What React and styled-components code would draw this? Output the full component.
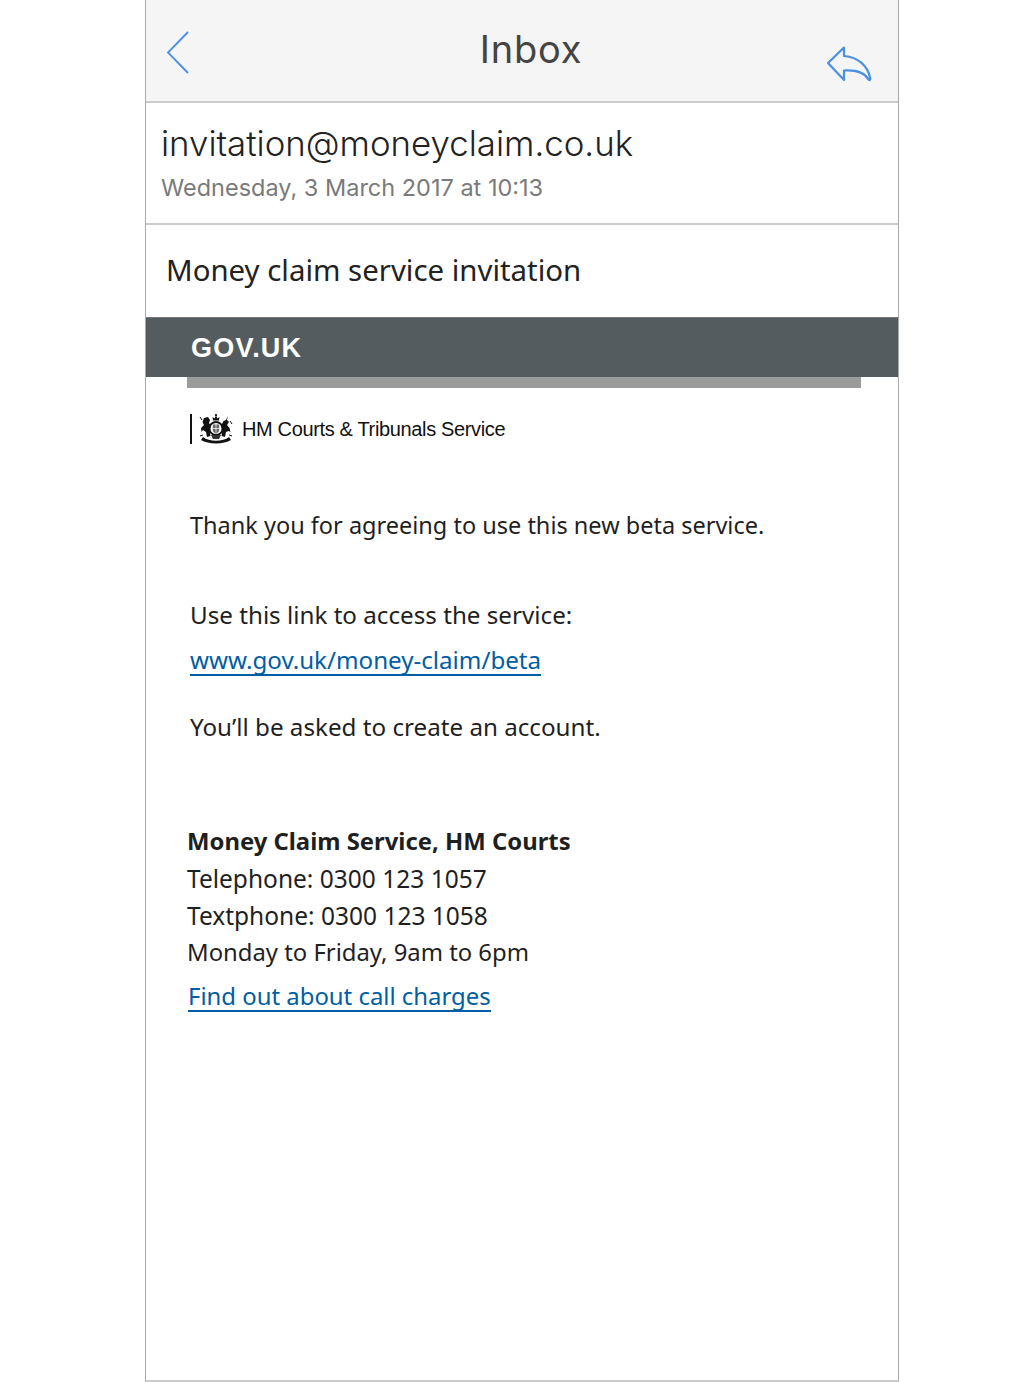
import React from "react";
import styled, { createGlobalStyle } from "styled-components";

const GlobalStyle = createGlobalStyle`
  html, body {
    margin: 0;
    padding: 0;
    background: #fff;
  }
`;

function BackIcon() {
  return (
    <svg width="26" height="46" viewBox="0 0 26 46" fill="none">
      <path d="M23 2 L3 22.5 L23 43" stroke="#4a90e2" strokeWidth="1.8" />
    </svg>
  );
}

function ReplyIcon() {
  return (
    <svg width="48" height="38" viewBox="0 0 48 38" fill="none">
      <path
        d="M18 2.5 L2 18 L18 35 L18 25.5 C28 25 38 26 42.5 34.5 C43.5 35.5 44.5 35 44.3 33.5 C42 21 32 12 18 11 Z"
        stroke="#4a90e2"
        strokeWidth="2.2"
        strokeLinejoin="round"
      />
    </svg>
  );
}

// small version of the royal crest: lion, crown, unicorn, shield, motto scroll
function Crest() {
  return (
    <svg width="34" height="30" viewBox="0 0 34 30" fill="#111">
      <path d="M14 6.5 L13.5 3 L15.5 4.5 L17 1.5 L18.5 4.5 L20.5 3 L20 6.5 Z" />
      <circle cx="17" cy="1.2" r="1.1" />
      <path d="M5 4 L9 3 L11 6 L10 9 L12 12 L10.5 16 L11.5 22 L8 23 L7 18 L4 16 L2.5 18 L2 14 L5 11 L3.5 8 Z" />
      <path d="M29 2 L28 6 L30 8 L28 11 L30.5 14 L31.5 18 L29.5 17 L27 18 L26 23 L22.5 22 L23.5 16 L22 12 L24.5 7 L27 6 Z" />
      <circle cx="17" cy="14.5" r="6.6" fill="none" stroke="#111" strokeWidth="2" />
      <path d="M13.8 10.5 H20.2 V16 C20.2 18 18.5 19 17 19.8 C15.5 19 13.8 18 13.8 16 Z" fill="#666" />
      <path d="M17 10.5 V19.8 M13.8 14.5 H20.2" stroke="#eee" strokeWidth="0.8" />
      <path d="M4 23 C10 28 24 28 30 23 L32 26 C25 30.5 9 30.5 2 26 Z" />
      <path d="M12 21 L22 21 L20 25 L14 25 Z" fill="#333" />
      <path d="M1 3 L3 6 M33 10 L31 7 M1 22 L4 21 M33 22 L30 21" stroke="#111" strokeWidth="1" />
    </svg>
  );
}

function App() {
  return (
    <>
      <GlobalStyle />
      <Phone>
        <NavBar>
          <BackButton>
            <BackIcon />
          </BackButton>
          <NavTitle>Inbox</NavTitle>
          <ReplyButton>
            <ReplyIcon />
          </ReplyButton>
        </NavBar>
        <Sender>
          <FromAddress>invitation@moneyclaim.co.uk</FromAddress>
          <SentDate>Wednesday, 3 March 2017 at 10:13</SentDate>
        </Sender>
        <Subject>Money claim service invitation</Subject>
        <GovBar>GOV.UK</GovBar>
        <GreyRule />
        <MailBody>
          <Logo>
            <LogoBar />
            <CrestBox>
              <Crest />
            </CrestBox>
            <LogoText>HM Courts &amp; Tribunals Service</LogoText>
          </Logo>
          <Para $top={66} $size={23.5}>
            Thank you for agreeing to use this new beta service.
          </Para>
          <Para $top={60}>Use this link to access the service:</Para>
          <MailLink $top={16} href="#">
            www.gov.uk/money-claim/beta
          </MailLink>
          <Para $top={36}>You’ll be asked to create an account.</Para>
          <Contact>
            <ContactLine $bold>Money Claim Service, HM Courts</ContactLine>
            <ContactLine $size={24.5}>Telephone: 0300 123 1057</ContactLine>
            <ContactLine $size={24.5}>Textphone: 0300 123 1058</ContactLine>
            <ContactLine>Monday to Friday, 9am to 6pm</ContactLine>
            <CallLink href="#">Find out about call charges</CallLink>
          </Contact>
        </MailBody>
      </Phone>
    </>
  );
}

const Phone = styled.div`
  box-sizing: border-box;
  width: 754px;
  height: 1382px;
  margin-left: 145px;
  border-left: 1px solid #a9a9a9;
  border-right: 1px solid #a9a9a9;
  border-bottom: 2px solid #cccccc;
  overflow: hidden;
  font-family: "Noto Sans", sans-serif;
  color: #1f1f1f;
`;

const NavBar = styled.div`
  position: relative;
  height: 101px;
  background: #f5f5f5;
  border-bottom: 2px solid #cccccc;
  display: flex;
  justify-content: center;
`;

const BackButton = styled.div`
  position: absolute;
  left: 19px;
  top: 30px;
  line-height: 0;
`;

const ReplyButton = styled.div`
  position: absolute;
  left: 680px;
  top: 45px;
  line-height: 0;
`;

const NavTitle = styled.div`
  margin: 26px 0 0 18px;
  font-family: "Inter", sans-serif;
  font-size: 38px;
  letter-spacing: 0.8px;
  line-height: 46px;
  color: #444;
`;

const Sender = styled.div`
  box-sizing: border-box;
  height: 122px;
  padding: 18px 0 0 15px;
  border-bottom: 2px solid #cccccc;
`;

const FromAddress = styled.div`
  font-family: "Inter", sans-serif;
  font-weight: 300;
  font-size: 34.8px;
  line-height: 44px;
  color: #222;
`;

const SentDate = styled.div`
  font-family: "Inter", sans-serif;
  font-size: 23.5px;
  line-height: 30px;
  margin-top: 8px;
  color: #7a7a7a;
`;

const Subject = styled.div`
  box-sizing: border-box;
  height: 92px;
  padding: 25px 0 0 20px;
  font-size: 29.4px;
  line-height: 40px;
  color: #222;
`;

const GovBar = styled.div`
  box-sizing: border-box;
  height: 60px;
  padding-left: 45px;
  background: #555c5f;
  border-top: 1px solid #777;
  font-family: "Liberation Sans", sans-serif;
  font-weight: 700;
  font-size: 27px;
  letter-spacing: 1.2px;
  line-height: 60px;
  color: #fff;
`;

const GreyRule = styled.div`
  height: 11px;
  width: 674px;
  margin-left: 41px;
  background: #9b9b9b;
`;

const MailBody = styled.div`
  padding-left: 44px;
`;

const Logo = styled.div`
  display: flex;
  align-items: center;
  height: 30px;
  margin-top: 26px;
`;

const LogoBar = styled.span`
  width: 2px;
  height: 30px;
  background: #111;
`;

const CrestBox = styled.span`
  margin-left: 7px;
  line-height: 0;
`;

const LogoText = styled.span`
  margin-left: 9px;
  font-family: "Liberation Sans", sans-serif;
  font-size: 20px;
  letter-spacing: -0.35px;
  color: #111;
`;

const Para = styled.div`
  margin-top: ${(p) => p.$top}px;
  font-size: ${(p) => p.$size || 24.2}px;
  line-height: 30px;
  color: #1f1f1f;
`;

const MailLink = styled.a`
  display: table;
  margin-top: ${(p) => p.$top}px;
  font-size: 24.15px;
  line-height: 28px;
  color: #005ea5;
  text-decoration: none;
  border-bottom: 2px solid #005ea5;
`;

const Contact = styled.div`
  margin: 81px 0 0 -3px;
`;

const ContactLine = styled.div`
  font-size: ${(p) => p.$size || 23.85}px;
  font-weight: ${(p) => (p.$bold ? 700 : 400)};
  line-height: 37px;
  color: #1f1f1f;
`;

const CallLink = styled(MailLink)`
  margin: 11px 0 0 1px;
  font-size: 23.9px;
`;

export default App;
